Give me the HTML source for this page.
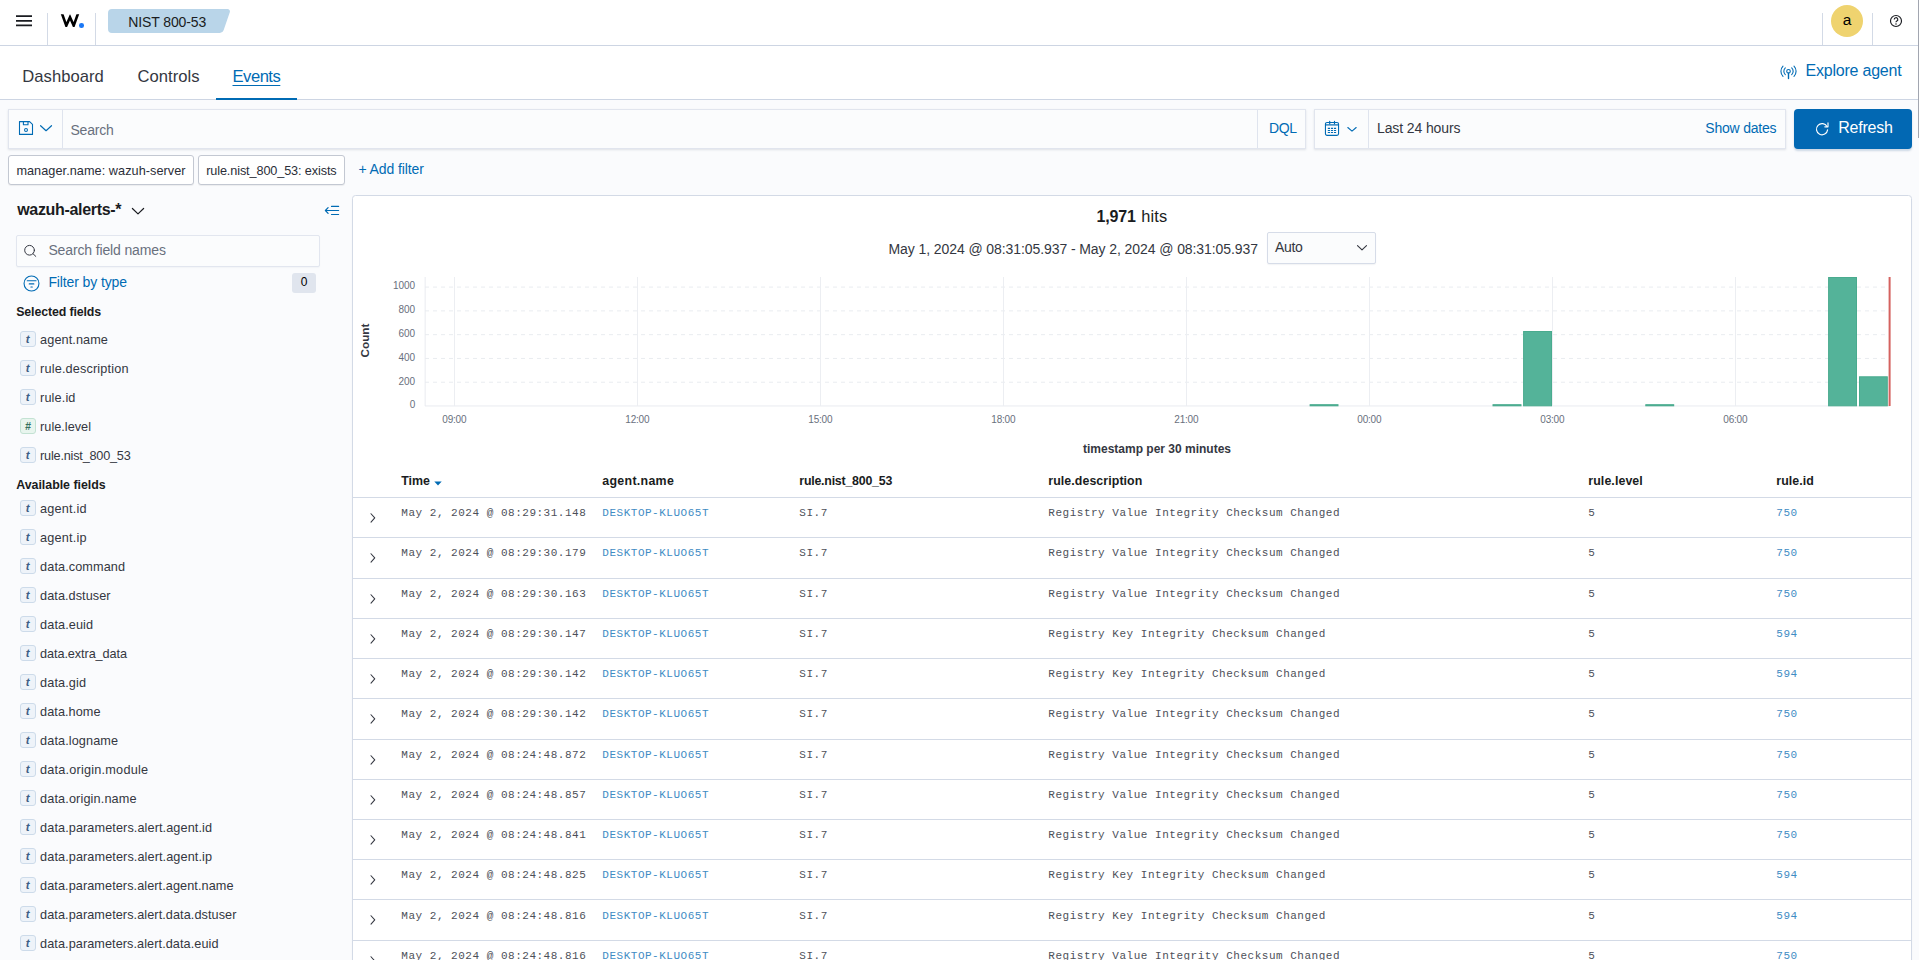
<!DOCTYPE html>
<html><head><meta charset="utf-8"><title>Wazuh</title>
<style>
html,body{margin:0;padding:0;}
body{width:1919px;height:960px;overflow:hidden;background:#fafbfd;position:relative;font-family:'Liberation Sans', sans-serif;}
.t{position:absolute;white-space:pre;}
.a{position:absolute;box-sizing:border-box;}

.line{position:absolute;background:#d3dae6;}
.tok{position:absolute;box-sizing:border-box;width:16px;height:16px;border-radius:3px;border:1px solid #cddbea;background:#eef3f9;}
.tok.n{border-color:#c3e2d3;background:#e8f5ee;}
.pill{position:absolute;box-sizing:border-box;background:#fff;border:1px solid #c3c8d2;border-radius:3px;box-shadow:0 1px 1px rgba(0,0,0,.06);}
.box{position:absolute;box-sizing:border-box;background:#fbfcfd;border:1px solid #e1e5ee;box-shadow:0 1px 2px rgba(100,110,130,.18);}

</style></head><body>
<div class="a" style="left:0;top:0;width:1919px;height:45px;background:#fff"></div><div class="line" style="left:0;top:45px;width:1919px;height:1px;background:#cdd5e3"></div><svg class="a" style="left:16px;top:13px" width="16" height="16" viewBox="0 0 16 16"><path d="M0 3.2h16M0 7.8h16M0 12.4h16" stroke="#1a1c21" stroke-width="1.7" fill="none"/></svg><div class="line" style="left:47px;top:13px;width:1px;height:32px"></div><div class="line" style="left:95px;top:13px;width:1px;height:32px"></div><svg class="a" style="left:59px;top:12px" width="22" height="17" viewBox="0 0 22 17"><defs><clipPath id="wc"><rect x="0" y="2.2" width="22" height="12.7"/></clipPath></defs><path clip-path="url(#wc)" d="M1.97 -1.2L7.3 13.6 11 5.3 14.7 13.6 20.03 -1.2" fill="none" stroke="#000" stroke-width="2.6" stroke-linejoin="miter" stroke-miterlimit="8"/></svg><div class="a" style="left:79.1px;top:23px;width:4.7px;height:4.7px;border-radius:50%;background:#1b78f5"></div><svg class="a" style="left:108px;top:9px" width="124" height="24" viewBox="0 0 124 24"><path d="M4 0H119.5a2.5 2.5 0 0 1 2.3 3.3L115.6 21.3a4 4 0 0 1 -3.8 2.7H4a4 4 0 0 1 -4 -4V4a4 4 0 0 1 4 -4z" fill="#b9d5e9"/></svg><div class="line" style="left:1822px;top:13px;width:1px;height:32px"></div><div class="line" style="left:1872px;top:13px;width:1px;height:32px"></div><div class="a" style="left:1831px;top:5px;width:32px;height:32px;border-radius:50%;background:#efd36f"></div><svg class="a" style="left:1888px;top:13px" width="16" height="16" viewBox="0 0 16 16"><circle cx="8" cy="8" r="5.5" fill="none" stroke="#1a1c21" stroke-width="1.15"/><path d="M6.2 6.5a1.8 1.8 0 1 1 2.7 1.55c-.6.35-.9.7-.9 1.25" fill="none" stroke="#1a1c21" stroke-width="1.15"/><circle cx="8" cy="11" r=".75" fill="#1a1c21"/></svg><div class="a" style="left:0;top:46px;width:1919px;height:54px;background:#fff"></div><div class="line" style="left:0;top:99px;width:1919px;height:1px;background:#cdd5e3"></div><div class="a" style="left:216px;top:98px;width:81px;height:2px;background:#006bb4"></div><svg class="a" style="left:1780.1px;top:63.9px" width="17" height="17" viewBox="0 0 17 17" fill="none" stroke="#006bb4" stroke-width="1.1" stroke-linecap="round"><circle cx="8.5" cy="7.3" r="1.8"/><path d="M8.5 9.1v5.4" stroke-width="1.4"/><path d="M5.3 3.9a4.7 4.7 0 0 0 0 6.8M11.7 3.9a4.7 4.7 0 0 1 0 6.8"/><path d="M3 2.2a7.3 7.3 0 0 0 0 10.2M14 2.2a7.3 7.3 0 0 1 0 10.2"/></svg><div class="box" style="left:8px;top:109px;width:1298px;height:40px"></div><div class="line" style="left:62px;top:110px;width:1px;height:38px;background:#dfe4ee"></div><div class="line" style="left:1257px;top:110px;width:1px;height:38px;background:#dfe4ee"></div><svg class="a" style="left:18px;top:120px" width="16" height="16" viewBox="0 0 16 16" fill="none" stroke="#006bb4" stroke-width="1.1" stroke-linejoin="round"><path d="M1.5 1.6H11.6L14.5 4.3V14.4H1.5z"/><path d="M5.4 1.6V4.8H10V1.6"/><circle cx="8" cy="10" r="1.45"/></svg><svg class="a" style="left:39px;top:123.8px" width="14" height="9" viewBox="0 0 14 9" fill="none" stroke="#006bb4" stroke-width="1.2" stroke-linecap="round" stroke-linejoin="round"><path d="M1.6 1.7L7.05 6.7 12.5 1.7"/></svg><div class="box" style="left:1314px;top:109px;width:472px;height:40px"></div><div class="line" style="left:1368px;top:110px;width:1px;height:38px;background:#dfe4ee"></div><svg class="a" style="left:1324px;top:120px" width="16" height="17" viewBox="0 0 16 17" fill="none" stroke="#006bb4" stroke-width="1.1"><rect x="1.45" y="2.45" width="13.1" height="12.9" rx="1.6"/><path d="M1.45 4.9h13.1" stroke-width="1.2"/><path d="M5.7 1.4v2.4M10.5 1.4v2.4" stroke-linecap="round" stroke-width="1.2"/><path d="M3.8 8.4h2.2M6.9 8.4h2.2M10 8.4h2.1M3.8 10.5h2.2M6.9 10.5h2.2M10 10.5h2.1M3.8 12.5h2.2M6.9 12.5h2.2M10 12.5h2.1" stroke-width="1.1"/></svg><svg class="a" style="left:1347px;top:125.6px" width="10" height="7" viewBox="0 0 10 7" fill="none" stroke="#006bb4" stroke-width="1.1" stroke-linecap="round" stroke-linejoin="round"><path d="M.8 1.5L5 5.2 9.2 1.5"/></svg><div class="a" style="left:1794px;top:109px;width:118px;height:40px;border-radius:4px;background:#0268b3;box-shadow:0 2px 2px rgba(0,60,120,.18)"></div><svg class="a" style="left:1814px;top:120.5px" width="16" height="16" viewBox="0 0 16 16" fill="none" stroke="#fff" stroke-width="1.15" stroke-linecap="round" stroke-linejoin="round"><path d="M13 5.6A5.6 5.6 0 1 0 13.6 8.9"/><path d="M10.8 5.8h3.2V1.9"/></svg><div class="pill" style="left:8px;top:155px;width:186px;height:30px"></div><div class="pill" style="left:198px;top:155px;width:147px;height:30px"></div><svg class="a" style="left:131px;top:206.5px" width="14" height="9" viewBox="0 0 14 9" fill="none" stroke="#1a1c21" stroke-width="1.2" stroke-linecap="round" stroke-linejoin="round"><path d="M1.4 1.5L7 6.9 12.6 1.5"/></svg><svg class="a" style="left:324px;top:204px" width="17" height="13" viewBox="0 0 17 13" fill="none" stroke="#006bb4" stroke-width="1.2" stroke-linecap="round" stroke-linejoin="round"><path d="M7.5 2.4H14.6M1.6 6.5H14.6M7.5 10.5H14.6"/><path d="M4.1 3.6L1.4 6.5 4.1 9.4"/></svg><div class="a" style="left:16px;top:235px;width:304px;height:32px;border:1px solid #e2e6ef;border-radius:2px;background:#fbfcfd;box-shadow:0 1px 1px rgba(100,110,130,.05)"></div><svg class="a" style="left:23px;top:244px" width="14" height="14" viewBox="0 0 14 14" fill="none" stroke="#343741" stroke-width="1" stroke-linecap="round"><circle cx="6.55" cy="6.25" r="4.85"/><path d="M10.1 9.8l2.7 2.6"/></svg><svg class="a" style="left:23.4px;top:274.5px" width="17" height="17" viewBox="0 0 17 17" fill="none" stroke="#006bb4" stroke-width="1.1" stroke-linecap="round"><circle cx="8.5" cy="8.5" r="7.45"/><path d="M4.25 5.8h8.8M6.25 8.9h4.6M7.9 12h1.4"/></svg><div class="a" style="left:292px;top:273px;width:24px;height:20px;border-radius:3px;background:#e0e5ee"></div><div class="tok" style="left:20px;top:331.3px"></div><div class="tok" style="left:20px;top:360.3px"></div><div class="tok" style="left:20px;top:389.3px"></div><div class="tok n" style="left:20px;top:418.3px"></div><div class="tok" style="left:20px;top:447.3px"></div><div class="tok" style="left:20px;top:500.3px"></div><div class="tok" style="left:20px;top:529.3px"></div><div class="tok" style="left:20px;top:558.3px"></div><div class="tok" style="left:20px;top:587.3px"></div><div class="tok" style="left:20px;top:616.3px"></div><div class="tok" style="left:20px;top:645.3px"></div><div class="tok" style="left:20px;top:674.3px"></div><div class="tok" style="left:20px;top:703.3px"></div><div class="tok" style="left:20px;top:732.3px"></div><div class="tok" style="left:20px;top:761.3px"></div><div class="tok" style="left:20px;top:790.3px"></div><div class="tok" style="left:20px;top:819.3px"></div><div class="tok" style="left:20px;top:848.3px"></div><div class="tok" style="left:20px;top:877.3px"></div><div class="tok" style="left:20px;top:906.3px"></div><div class="tok" style="left:20px;top:935.3px"></div><div class="a" style="left:352px;top:195px;width:1560px;height:800px;background:#fff;border:1px solid #d3dae6;border-radius:3.5px;box-shadow:0 2px 2px -1px rgba(152,162,179,.3)"></div><div class="a" style="left:1267px;top:232px;width:109px;height:32px;border:1px solid #d6dce8;border-radius:2px;background:#fbfcfd;box-shadow:0 1px 1px rgba(100,110,130,.08)"></div><svg class="a" style="left:1356px;top:244.1px" width="12" height="8" viewBox="0 0 12 8" fill="none" stroke="#343741" stroke-width="1.1" stroke-linecap="round" stroke-linejoin="round"><path d="M1.5 1.6L6 5.9 10.5 1.6"/></svg><svg class="a" style="left:0;top:0" width="1919" height="470" viewBox="0 0 1919 470"><path d="M425 382.22H1890" stroke="#e9ecf0" stroke-width="1" stroke-dasharray="4 4" fill="none"/><path d="M425 358.44H1890" stroke="#e9ecf0" stroke-width="1" stroke-dasharray="4 4" fill="none"/><path d="M425 334.66H1890" stroke="#e9ecf0" stroke-width="1" stroke-dasharray="4 4" fill="none"/><path d="M425 310.88H1890" stroke="#e9ecf0" stroke-width="1" stroke-dasharray="4 4" fill="none"/><path d="M425 287.10H1890" stroke="#e9ecf0" stroke-width="1" stroke-dasharray="4 4" fill="none"/><path d="M425 405.95H1890" stroke="#e9ebf0" stroke-width="1" fill="none"/><path d="M425.15 277V406" stroke="#e9ebf0" stroke-width="1" fill="none"/><path d="M454.5 277V406" stroke="#eceef2" stroke-width="1" fill="none"/><path d="M637.5 277V406" stroke="#eceef2" stroke-width="1" fill="none"/><path d="M820.5 277V406" stroke="#eceef2" stroke-width="1" fill="none"/><path d="M1003.5 277V406" stroke="#eceef2" stroke-width="1" fill="none"/><path d="M1186.5 277V406" stroke="#eceef2" stroke-width="1" fill="none"/><path d="M1369.5 277V406" stroke="#eceef2" stroke-width="1" fill="none"/><path d="M1552.5 277V406" stroke="#eceef2" stroke-width="1" fill="none"/><path d="M1735.5 277V406" stroke="#eceef2" stroke-width="1" fill="none"/><rect x="1310.1" y="404.7" width="27.9" height="1.1" fill="#54b399" stroke="#49ab8e" stroke-width="1"/><rect x="1493.0" y="404.7" width="28.0" height="1.1" fill="#54b399" stroke="#49ab8e" stroke-width="1"/><rect x="1523.6" y="331.5" width="27.9" height="74.3" fill="#54b399" stroke="#49ab8e" stroke-width="1"/><rect x="1645.8" y="404.7" width="27.9" height="1.1" fill="#54b399" stroke="#49ab8e" stroke-width="1"/><rect x="1828.6" y="277.5" width="27.9" height="128.3" fill="#54b399" stroke="#49ab8e" stroke-width="1"/><rect x="1859.5" y="376.8" width="27.8" height="29.0" fill="#54b399" stroke="#49ab8e" stroke-width="1"/><rect x="1888.6" y="277" width="2" height="129" fill="#d5625f"/></svg><svg class="a" style="left:433.9px;top:480.8px" width="8" height="5" viewBox="0 0 8 5"><path d="M.3 .5h7.4L4 4.5z" fill="#006bb4"/></svg><div class="line" style="left:353px;top:497px;width:1558px;height:1px;background:#d3dae6"></div><svg class="a" style="left:368px;top:511px" width="9" height="13" viewBox="0 0 9 13" fill="none" stroke="#343741" stroke-width="1.05" stroke-linecap="round" stroke-linejoin="round"><path d="M3 2.75L6.75 6.95 3 11.15"/></svg><div class="line" style="left:353px;top:537px;width:1558px;height:1px;background:#d3dae6"></div><svg class="a" style="left:368px;top:551px" width="9" height="13" viewBox="0 0 9 13" fill="none" stroke="#343741" stroke-width="1.05" stroke-linecap="round" stroke-linejoin="round"><path d="M3 2.75L6.75 6.95 3 11.15"/></svg><div class="line" style="left:353px;top:578px;width:1558px;height:1px;background:#d3dae6"></div><svg class="a" style="left:368px;top:592px" width="9" height="13" viewBox="0 0 9 13" fill="none" stroke="#343741" stroke-width="1.05" stroke-linecap="round" stroke-linejoin="round"><path d="M3 2.75L6.75 6.95 3 11.15"/></svg><div class="line" style="left:353px;top:618px;width:1558px;height:1px;background:#d3dae6"></div><svg class="a" style="left:368px;top:632px" width="9" height="13" viewBox="0 0 9 13" fill="none" stroke="#343741" stroke-width="1.05" stroke-linecap="round" stroke-linejoin="round"><path d="M3 2.75L6.75 6.95 3 11.15"/></svg><div class="line" style="left:353px;top:658px;width:1558px;height:1px;background:#d3dae6"></div><svg class="a" style="left:368px;top:672px" width="9" height="13" viewBox="0 0 9 13" fill="none" stroke="#343741" stroke-width="1.05" stroke-linecap="round" stroke-linejoin="round"><path d="M3 2.75L6.75 6.95 3 11.15"/></svg><div class="line" style="left:353px;top:698px;width:1558px;height:1px;background:#d3dae6"></div><svg class="a" style="left:368px;top:712px" width="9" height="13" viewBox="0 0 9 13" fill="none" stroke="#343741" stroke-width="1.05" stroke-linecap="round" stroke-linejoin="round"><path d="M3 2.75L6.75 6.95 3 11.15"/></svg><div class="line" style="left:353px;top:739px;width:1558px;height:1px;background:#d3dae6"></div><svg class="a" style="left:368px;top:753px" width="9" height="13" viewBox="0 0 9 13" fill="none" stroke="#343741" stroke-width="1.05" stroke-linecap="round" stroke-linejoin="round"><path d="M3 2.75L6.75 6.95 3 11.15"/></svg><div class="line" style="left:353px;top:779px;width:1558px;height:1px;background:#d3dae6"></div><svg class="a" style="left:368px;top:793px" width="9" height="13" viewBox="0 0 9 13" fill="none" stroke="#343741" stroke-width="1.05" stroke-linecap="round" stroke-linejoin="round"><path d="M3 2.75L6.75 6.95 3 11.15"/></svg><div class="line" style="left:353px;top:819px;width:1558px;height:1px;background:#d3dae6"></div><svg class="a" style="left:368px;top:833px" width="9" height="13" viewBox="0 0 9 13" fill="none" stroke="#343741" stroke-width="1.05" stroke-linecap="round" stroke-linejoin="round"><path d="M3 2.75L6.75 6.95 3 11.15"/></svg><div class="line" style="left:353px;top:859px;width:1558px;height:1px;background:#d3dae6"></div><svg class="a" style="left:368px;top:873px" width="9" height="13" viewBox="0 0 9 13" fill="none" stroke="#343741" stroke-width="1.05" stroke-linecap="round" stroke-linejoin="round"><path d="M3 2.75L6.75 6.95 3 11.15"/></svg><div class="line" style="left:353px;top:899px;width:1558px;height:1px;background:#d3dae6"></div><svg class="a" style="left:368px;top:913px" width="9" height="13" viewBox="0 0 9 13" fill="none" stroke="#343741" stroke-width="1.05" stroke-linecap="round" stroke-linejoin="round"><path d="M3 2.75L6.75 6.95 3 11.15"/></svg><div class="line" style="left:353px;top:940px;width:1558px;height:1px;background:#d3dae6"></div><svg class="a" style="left:368px;top:954px" width="9" height="13" viewBox="0 0 9 13" fill="none" stroke="#343741" stroke-width="1.05" stroke-linecap="round" stroke-linejoin="round"><path d="M3 2.75L6.75 6.95 3 11.15"/></svg><div class="a" style="left:1918px;top:0;width:1px;height:138px;background:#a2a6b0"></div>
<span class="t" style="left:128.30px;top:14.00px;font-family:'Liberation Sans', sans-serif;font-size:14px;line-height:16px;color:#1a1c21;letter-spacing:-0.113px;">NIST 800-53</span><span class="t" style="left:1842.69px;top:11.00px;font-family:'Liberation Sans', sans-serif;font-size:15.5px;line-height:17px;color:#000;">a</span><span class="t" style="left:22.30px;top:67.00px;font-family:'Liberation Sans', sans-serif;font-size:16.6px;line-height:19px;color:#343741;letter-spacing:0.039px;">Dashboard</span><span class="t" style="left:137.50px;top:67.00px;font-family:'Liberation Sans', sans-serif;font-size:16.6px;line-height:19px;color:#343741;letter-spacing:0.029px;">Controls</span><span class="t" style="left:232.50px;top:67.00px;font-family:'Liberation Sans', sans-serif;font-size:16.6px;line-height:19px;color:#006bb4;letter-spacing:-0.487px;text-decoration:underline;text-decoration-thickness:1px;text-underline-offset:2.5px;">Events</span><span class="t" style="left:1805.60px;top:62.00px;font-family:'Liberation Sans', sans-serif;font-size:16px;line-height:17px;color:#006bb4;letter-spacing:-0.228px;">Explore agent</span><span class="t" style="left:70.50px;top:122.00px;font-family:'Liberation Sans', sans-serif;font-size:14px;line-height:16px;color:#69707d;letter-spacing:-0.232px;">Search</span><span class="t" style="left:1269.00px;top:120.00px;font-family:'Liberation Sans', sans-serif;font-size:14px;line-height:16px;color:#006bb4;letter-spacing:-0.398px;">DQL</span><span class="t" style="left:1377.00px;top:120.00px;font-family:'Liberation Sans', sans-serif;font-size:14px;line-height:16px;color:#343741;letter-spacing:-0.112px;">Last 24 hours</span><span class="t" style="left:1705.30px;top:120.00px;font-family:'Liberation Sans', sans-serif;font-size:14px;line-height:16px;color:#006bb4;letter-spacing:-0.208px;">Show dates</span><span class="t" style="left:1838.30px;top:119.00px;font-family:'Liberation Sans', sans-serif;font-size:16px;line-height:17px;color:#fff;letter-spacing:-0.255px;">Refresh</span><span class="t" style="left:16.40px;top:164.00px;font-family:'Liberation Sans', sans-serif;font-size:12.7px;line-height:14px;color:#2b2e38;letter-spacing:0.054px;">manager.name: wazuh-server</span><span class="t" style="left:206.20px;top:164.00px;font-family:'Liberation Sans', sans-serif;font-size:12.7px;line-height:14px;color:#2b2e38;letter-spacing:-0.122px;">rule.nist_800_53: exists</span><span class="t" style="left:358.40px;top:161.00px;font-family:'Liberation Sans', sans-serif;font-size:14px;line-height:16px;color:#006bb4;letter-spacing:-0.095px;">+ Add filter</span><span class="t" style="left:17.20px;top:201.00px;font-family:'Liberation Sans', sans-serif;font-size:16px;line-height:17px;color:#1a1c21;font-weight:700;letter-spacing:-0.321px;">wazuh-alerts-*</span><span class="t" style="left:48.40px;top:242.00px;font-family:'Liberation Sans', sans-serif;font-size:14px;line-height:16px;color:#69707d;letter-spacing:-0.138px;">Search field names</span><span class="t" style="left:48.40px;top:274.00px;font-family:'Liberation Sans', sans-serif;font-size:14px;line-height:16px;color:#006bb4;letter-spacing:-0.119px;">Filter by type</span><span class="t" style="left:300.66px;top:275.00px;font-family:'Liberation Sans', sans-serif;font-size:12px;line-height:14px;color:#000;">0</span><span class="t" style="left:16.20px;top:305.00px;font-family:'Liberation Sans', sans-serif;font-size:12.4px;line-height:14px;color:#1a1c21;font-weight:700;letter-spacing:-0.127px;">Selected fields</span><span class="t" style="left:16.20px;top:478.00px;font-family:'Liberation Sans', sans-serif;font-size:12.4px;line-height:14px;color:#1a1c21;font-weight:700;letter-spacing:-0.018px;">Available fields</span><span class="t" style="left:25.78px;top:333.00px;font-family:'Liberation Sans', sans-serif;font-size:11.5px;line-height:12px;color:#3f5f86;font-weight:700;font-style:italic;">t</span><span class="t" style="left:40.10px;top:333.00px;font-family:'Liberation Sans', sans-serif;font-size:12.7px;line-height:14px;color:#343741;letter-spacing:0.087px;">agent.name</span><span class="t" style="left:25.78px;top:362.00px;font-family:'Liberation Sans', sans-serif;font-size:11.5px;line-height:12px;color:#3f5f86;font-weight:700;font-style:italic;">t</span><span class="t" style="left:40.10px;top:362.00px;font-family:'Liberation Sans', sans-serif;font-size:12.7px;line-height:14px;color:#343741;letter-spacing:0.157px;">rule.description</span><span class="t" style="left:25.78px;top:391.00px;font-family:'Liberation Sans', sans-serif;font-size:11.5px;line-height:12px;color:#3f5f86;font-weight:700;font-style:italic;">t</span><span class="t" style="left:40.10px;top:391.00px;font-family:'Liberation Sans', sans-serif;font-size:12.7px;line-height:14px;color:#343741;letter-spacing:0.123px;">rule.id</span><span class="t" style="left:24.98px;top:420.00px;font-family:'Liberation Sans', sans-serif;font-size:10.5px;line-height:12px;color:#357160;font-weight:700;font-style:italic;">#</span><span class="t" style="left:40.10px;top:420.00px;font-family:'Liberation Sans', sans-serif;font-size:12.7px;line-height:14px;color:#343741;letter-spacing:0.013px;">rule.level</span><span class="t" style="left:25.78px;top:449.00px;font-family:'Liberation Sans', sans-serif;font-size:11.5px;line-height:12px;color:#3f5f86;font-weight:700;font-style:italic;">t</span><span class="t" style="left:40.10px;top:449.00px;font-family:'Liberation Sans', sans-serif;font-size:12.7px;line-height:14px;color:#343741;letter-spacing:-0.209px;">rule.nist_800_53</span><span class="t" style="left:25.78px;top:502.00px;font-family:'Liberation Sans', sans-serif;font-size:11.5px;line-height:12px;color:#3f5f86;font-weight:700;font-style:italic;">t</span><span class="t" style="left:40.10px;top:502.00px;font-family:'Liberation Sans', sans-serif;font-size:12.7px;line-height:14px;color:#343741;letter-spacing:0.178px;">agent.id</span><span class="t" style="left:25.78px;top:531.00px;font-family:'Liberation Sans', sans-serif;font-size:11.5px;line-height:12px;color:#3f5f86;font-weight:700;font-style:italic;">t</span><span class="t" style="left:40.10px;top:531.00px;font-family:'Liberation Sans', sans-serif;font-size:12.7px;line-height:14px;color:#343741;letter-spacing:0.178px;">agent.ip</span><span class="t" style="left:25.78px;top:560.00px;font-family:'Liberation Sans', sans-serif;font-size:11.5px;line-height:12px;color:#3f5f86;font-weight:700;font-style:italic;">t</span><span class="t" style="left:40.10px;top:560.00px;font-family:'Liberation Sans', sans-serif;font-size:12.7px;line-height:14px;color:#343741;letter-spacing:0.088px;">data.command</span><span class="t" style="left:25.78px;top:589.00px;font-family:'Liberation Sans', sans-serif;font-size:11.5px;line-height:12px;color:#3f5f86;font-weight:700;font-style:italic;">t</span><span class="t" style="left:40.10px;top:589.00px;font-family:'Liberation Sans', sans-serif;font-size:12.7px;line-height:14px;color:#343741;letter-spacing:0.052px;">data.dstuser</span><span class="t" style="left:25.78px;top:618.00px;font-family:'Liberation Sans', sans-serif;font-size:11.5px;line-height:12px;color:#3f5f86;font-weight:700;font-style:italic;">t</span><span class="t" style="left:40.10px;top:618.00px;font-family:'Liberation Sans', sans-serif;font-size:12.7px;line-height:14px;color:#343741;letter-spacing:0.085px;">data.euid</span><span class="t" style="left:25.78px;top:647.00px;font-family:'Liberation Sans', sans-serif;font-size:11.5px;line-height:12px;color:#3f5f86;font-weight:700;font-style:italic;">t</span><span class="t" style="left:40.10px;top:647.00px;font-family:'Liberation Sans', sans-serif;font-size:12.7px;line-height:14px;color:#343741;letter-spacing:-0.092px;">data.extra_data</span><span class="t" style="left:25.78px;top:676.00px;font-family:'Liberation Sans', sans-serif;font-size:11.5px;line-height:12px;color:#3f5f86;font-weight:700;font-style:italic;">t</span><span class="t" style="left:40.10px;top:676.00px;font-family:'Liberation Sans', sans-serif;font-size:12.7px;line-height:14px;color:#343741;letter-spacing:0.106px;">data.gid</span><span class="t" style="left:25.78px;top:705.00px;font-family:'Liberation Sans', sans-serif;font-size:11.5px;line-height:12px;color:#3f5f86;font-weight:700;font-style:italic;">t</span><span class="t" style="left:40.10px;top:705.00px;font-family:'Liberation Sans', sans-serif;font-size:12.7px;line-height:14px;color:#343741;letter-spacing:0.054px;">data.home</span><span class="t" style="left:25.78px;top:734.00px;font-family:'Liberation Sans', sans-serif;font-size:11.5px;line-height:12px;color:#3f5f86;font-weight:700;font-style:italic;">t</span><span class="t" style="left:40.10px;top:734.00px;font-family:'Liberation Sans', sans-serif;font-size:12.7px;line-height:14px;color:#343741;letter-spacing:0.092px;">data.logname</span><span class="t" style="left:25.78px;top:763.00px;font-family:'Liberation Sans', sans-serif;font-size:11.5px;line-height:12px;color:#3f5f86;font-weight:700;font-style:italic;">t</span><span class="t" style="left:40.10px;top:763.00px;font-family:'Liberation Sans', sans-serif;font-size:12.7px;line-height:14px;color:#343741;letter-spacing:0.206px;">data.origin.module</span><span class="t" style="left:25.78px;top:792.00px;font-family:'Liberation Sans', sans-serif;font-size:11.5px;line-height:12px;color:#3f5f86;font-weight:700;font-style:italic;">t</span><span class="t" style="left:40.10px;top:792.00px;font-family:'Liberation Sans', sans-serif;font-size:12.7px;line-height:14px;color:#343741;letter-spacing:0.126px;">data.origin.name</span><span class="t" style="left:25.78px;top:821.00px;font-family:'Liberation Sans', sans-serif;font-size:11.5px;line-height:12px;color:#3f5f86;font-weight:700;font-style:italic;">t</span><span class="t" style="left:40.10px;top:821.00px;font-family:'Liberation Sans', sans-serif;font-size:12.7px;line-height:14px;color:#343741;letter-spacing:0.090px;">data.parameters.alert.agent.id</span><span class="t" style="left:25.78px;top:850.00px;font-family:'Liberation Sans', sans-serif;font-size:11.5px;line-height:12px;color:#3f5f86;font-weight:700;font-style:italic;">t</span><span class="t" style="left:40.10px;top:850.00px;font-family:'Liberation Sans', sans-serif;font-size:12.7px;line-height:14px;color:#343741;letter-spacing:0.090px;">data.parameters.alert.agent.ip</span><span class="t" style="left:25.78px;top:879.00px;font-family:'Liberation Sans', sans-serif;font-size:11.5px;line-height:12px;color:#3f5f86;font-weight:700;font-style:italic;">t</span><span class="t" style="left:40.10px;top:879.00px;font-family:'Liberation Sans', sans-serif;font-size:12.7px;line-height:14px;color:#343741;letter-spacing:0.073px;">data.parameters.alert.agent.name</span><span class="t" style="left:25.78px;top:908.00px;font-family:'Liberation Sans', sans-serif;font-size:11.5px;line-height:12px;color:#3f5f86;font-weight:700;font-style:italic;">t</span><span class="t" style="left:40.10px;top:908.00px;font-family:'Liberation Sans', sans-serif;font-size:12.7px;line-height:14px;color:#343741;letter-spacing:0.074px;">data.parameters.alert.data.dstuser</span><span class="t" style="left:25.78px;top:937.00px;font-family:'Liberation Sans', sans-serif;font-size:11.5px;line-height:12px;color:#3f5f86;font-weight:700;font-style:italic;">t</span><span class="t" style="left:40.10px;top:937.00px;font-family:'Liberation Sans', sans-serif;font-size:12.7px;line-height:14px;color:#343741;letter-spacing:0.069px;">data.parameters.alert.data.euid</span><span class="t" style="left:1096.40px;top:208.00px;font-family:'Liberation Sans', sans-serif;font-size:16px;line-height:17px;color:#1a1c21;font-weight:700;letter-spacing:-0.137px;">1,971</span><span class="t" style="left:1141.20px;top:207.00px;font-family:'Liberation Sans', sans-serif;font-size:16.4px;line-height:18px;color:#1a1c21;letter-spacing:0.161px;">hits</span><span class="t" style="left:888.50px;top:241.00px;font-family:'Liberation Sans', sans-serif;font-size:14px;line-height:16px;color:#343741;letter-spacing:-0.084px;">May 1, 2024 @ 08:31:05.937 - May 2, 2024 @ 08:31:05.937</span><span class="t" style="left:1275.10px;top:239.00px;font-family:'Liberation Sans', sans-serif;font-size:14px;line-height:16px;color:#343741;letter-spacing:-0.371px;">Auto</span><span class="t" style="left:392.95px;top:280.00px;font-family:'Liberation Sans', sans-serif;font-size:10px;line-height:11px;color:#69707d;">1000</span><span class="t" style="left:398.51px;top:304.00px;font-family:'Liberation Sans', sans-serif;font-size:10px;line-height:11px;color:#69707d;">800</span><span class="t" style="left:398.51px;top:328.00px;font-family:'Liberation Sans', sans-serif;font-size:10px;line-height:11px;color:#69707d;">600</span><span class="t" style="left:398.51px;top:352.00px;font-family:'Liberation Sans', sans-serif;font-size:10px;line-height:11px;color:#69707d;">400</span><span class="t" style="left:398.51px;top:376.00px;font-family:'Liberation Sans', sans-serif;font-size:10px;line-height:11px;color:#69707d;">200</span><span class="t" style="left:409.64px;top:399.00px;font-family:'Liberation Sans', sans-serif;font-size:10px;line-height:11px;color:#69707d;">0</span><span class="t" style="left:442.30px;top:414.00px;font-family:'Liberation Sans', sans-serif;font-size:10px;line-height:11px;color:#69707d;letter-spacing:-0.208px;">09:00</span><span class="t" style="left:625.30px;top:414.00px;font-family:'Liberation Sans', sans-serif;font-size:10px;line-height:11px;color:#69707d;letter-spacing:-0.208px;">12:00</span><span class="t" style="left:808.30px;top:414.00px;font-family:'Liberation Sans', sans-serif;font-size:10px;line-height:11px;color:#69707d;letter-spacing:-0.208px;">15:00</span><span class="t" style="left:991.30px;top:414.00px;font-family:'Liberation Sans', sans-serif;font-size:10px;line-height:11px;color:#69707d;letter-spacing:-0.208px;">18:00</span><span class="t" style="left:1174.30px;top:414.00px;font-family:'Liberation Sans', sans-serif;font-size:10px;line-height:11px;color:#69707d;letter-spacing:-0.208px;">21:00</span><span class="t" style="left:1357.30px;top:414.00px;font-family:'Liberation Sans', sans-serif;font-size:10px;line-height:11px;color:#69707d;letter-spacing:-0.208px;">00:00</span><span class="t" style="left:1540.30px;top:414.00px;font-family:'Liberation Sans', sans-serif;font-size:10px;line-height:11px;color:#69707d;letter-spacing:-0.208px;">03:00</span><span class="t" style="left:1723.30px;top:414.00px;font-family:'Liberation Sans', sans-serif;font-size:10px;line-height:11px;color:#69707d;letter-spacing:-0.208px;">06:00</span><span class="t" style="left:1083.00px;top:442.00px;font-family:'Liberation Sans', sans-serif;font-size:12px;line-height:14px;color:#343741;font-weight:700;letter-spacing:-0.003px;">timestamp per 30 minutes</span><span class="t" style="left:348.02px;top:334.00px;font-family:'Liberation Sans', sans-serif;font-size:11.7px;line-height:13px;color:#343741;font-weight:700;transform:rotate(-90deg);transform-origin:center center;">Count</span><span class="t" style="left:401.30px;top:474.00px;font-family:'Liberation Sans', sans-serif;font-size:12.4px;line-height:14px;color:#1a1c21;font-weight:700;letter-spacing:-0.068px;">Time</span><span class="t" style="left:602.30px;top:474.00px;font-family:'Liberation Sans', sans-serif;font-size:12.4px;line-height:14px;color:#1a1c21;font-weight:700;letter-spacing:0.293px;">agent.name</span><span class="t" style="left:799.30px;top:474.00px;font-family:'Liberation Sans', sans-serif;font-size:12.4px;line-height:14px;color:#1a1c21;font-weight:700;letter-spacing:-0.229px;">rule.nist_800_53</span><span class="t" style="left:1048.30px;top:474.00px;font-family:'Liberation Sans', sans-serif;font-size:12.4px;line-height:14px;color:#1a1c21;font-weight:700;letter-spacing:0.070px;">rule.description</span><span class="t" style="left:1588.30px;top:474.00px;font-family:'Liberation Sans', sans-serif;font-size:12.4px;line-height:14px;color:#1a1c21;font-weight:700;letter-spacing:0.085px;">rule.level</span><span class="t" style="left:1776.30px;top:474.00px;font-family:'Liberation Sans', sans-serif;font-size:12.4px;line-height:14px;color:#1a1c21;font-weight:700;letter-spacing:0.052px;">rule.id</span><span class="t" style="left:401.30px;top:507.00px;font-family:'Liberation Mono', monospace;font-size:11px;line-height:12px;color:#4d5059;letter-spacing:0.515px;">May 2, 2024 @ 08:29:31.148</span><span class="t" style="left:602.30px;top:507.00px;font-family:'Liberation Mono', monospace;font-size:11px;line-height:12px;color:#3f8cc4;letter-spacing:0.515px;">DESKTOP-KLUO65T</span><span class="t" style="left:799.30px;top:507.00px;font-family:'Liberation Mono', monospace;font-size:11px;line-height:12px;color:#4d5059;letter-spacing:0.515px;">SI.7</span><span class="t" style="left:1048.30px;top:507.00px;font-family:'Liberation Mono', monospace;font-size:11px;line-height:12px;color:#4d5059;letter-spacing:0.515px;">Registry Value Integrity Checksum Changed</span><span class="t" style="left:1588.30px;top:507.00px;font-family:'Liberation Mono', monospace;font-size:11px;line-height:12px;color:#4d5059;">5</span><span class="t" style="left:1776.30px;top:507.00px;font-family:'Liberation Mono', monospace;font-size:11px;line-height:12px;color:#3f8cc4;letter-spacing:0.515px;">750</span><span class="t" style="left:401.30px;top:547.00px;font-family:'Liberation Mono', monospace;font-size:11px;line-height:12px;color:#4d5059;letter-spacing:0.515px;">May 2, 2024 @ 08:29:30.179</span><span class="t" style="left:602.30px;top:547.00px;font-family:'Liberation Mono', monospace;font-size:11px;line-height:12px;color:#3f8cc4;letter-spacing:0.515px;">DESKTOP-KLUO65T</span><span class="t" style="left:799.30px;top:547.00px;font-family:'Liberation Mono', monospace;font-size:11px;line-height:12px;color:#4d5059;letter-spacing:0.515px;">SI.7</span><span class="t" style="left:1048.30px;top:547.00px;font-family:'Liberation Mono', monospace;font-size:11px;line-height:12px;color:#4d5059;letter-spacing:0.515px;">Registry Value Integrity Checksum Changed</span><span class="t" style="left:1588.30px;top:547.00px;font-family:'Liberation Mono', monospace;font-size:11px;line-height:12px;color:#4d5059;">5</span><span class="t" style="left:1776.30px;top:547.00px;font-family:'Liberation Mono', monospace;font-size:11px;line-height:12px;color:#3f8cc4;letter-spacing:0.515px;">750</span><span class="t" style="left:401.30px;top:588.00px;font-family:'Liberation Mono', monospace;font-size:11px;line-height:12px;color:#4d5059;letter-spacing:0.515px;">May 2, 2024 @ 08:29:30.163</span><span class="t" style="left:602.30px;top:588.00px;font-family:'Liberation Mono', monospace;font-size:11px;line-height:12px;color:#3f8cc4;letter-spacing:0.515px;">DESKTOP-KLUO65T</span><span class="t" style="left:799.30px;top:588.00px;font-family:'Liberation Mono', monospace;font-size:11px;line-height:12px;color:#4d5059;letter-spacing:0.515px;">SI.7</span><span class="t" style="left:1048.30px;top:588.00px;font-family:'Liberation Mono', monospace;font-size:11px;line-height:12px;color:#4d5059;letter-spacing:0.515px;">Registry Value Integrity Checksum Changed</span><span class="t" style="left:1588.30px;top:588.00px;font-family:'Liberation Mono', monospace;font-size:11px;line-height:12px;color:#4d5059;">5</span><span class="t" style="left:1776.30px;top:588.00px;font-family:'Liberation Mono', monospace;font-size:11px;line-height:12px;color:#3f8cc4;letter-spacing:0.515px;">750</span><span class="t" style="left:401.30px;top:628.00px;font-family:'Liberation Mono', monospace;font-size:11px;line-height:12px;color:#4d5059;letter-spacing:0.515px;">May 2, 2024 @ 08:29:30.147</span><span class="t" style="left:602.30px;top:628.00px;font-family:'Liberation Mono', monospace;font-size:11px;line-height:12px;color:#3f8cc4;letter-spacing:0.515px;">DESKTOP-KLUO65T</span><span class="t" style="left:799.30px;top:628.00px;font-family:'Liberation Mono', monospace;font-size:11px;line-height:12px;color:#4d5059;letter-spacing:0.515px;">SI.7</span><span class="t" style="left:1048.30px;top:628.00px;font-family:'Liberation Mono', monospace;font-size:11px;line-height:12px;color:#4d5059;letter-spacing:0.515px;">Registry Key Integrity Checksum Changed</span><span class="t" style="left:1588.30px;top:628.00px;font-family:'Liberation Mono', monospace;font-size:11px;line-height:12px;color:#4d5059;">5</span><span class="t" style="left:1776.30px;top:628.00px;font-family:'Liberation Mono', monospace;font-size:11px;line-height:12px;color:#3f8cc4;letter-spacing:0.515px;">594</span><span class="t" style="left:401.30px;top:668.00px;font-family:'Liberation Mono', monospace;font-size:11px;line-height:12px;color:#4d5059;letter-spacing:0.515px;">May 2, 2024 @ 08:29:30.142</span><span class="t" style="left:602.30px;top:668.00px;font-family:'Liberation Mono', monospace;font-size:11px;line-height:12px;color:#3f8cc4;letter-spacing:0.515px;">DESKTOP-KLUO65T</span><span class="t" style="left:799.30px;top:668.00px;font-family:'Liberation Mono', monospace;font-size:11px;line-height:12px;color:#4d5059;letter-spacing:0.515px;">SI.7</span><span class="t" style="left:1048.30px;top:668.00px;font-family:'Liberation Mono', monospace;font-size:11px;line-height:12px;color:#4d5059;letter-spacing:0.515px;">Registry Key Integrity Checksum Changed</span><span class="t" style="left:1588.30px;top:668.00px;font-family:'Liberation Mono', monospace;font-size:11px;line-height:12px;color:#4d5059;">5</span><span class="t" style="left:1776.30px;top:668.00px;font-family:'Liberation Mono', monospace;font-size:11px;line-height:12px;color:#3f8cc4;letter-spacing:0.515px;">594</span><span class="t" style="left:401.30px;top:708.00px;font-family:'Liberation Mono', monospace;font-size:11px;line-height:12px;color:#4d5059;letter-spacing:0.515px;">May 2, 2024 @ 08:29:30.142</span><span class="t" style="left:602.30px;top:708.00px;font-family:'Liberation Mono', monospace;font-size:11px;line-height:12px;color:#3f8cc4;letter-spacing:0.515px;">DESKTOP-KLUO65T</span><span class="t" style="left:799.30px;top:708.00px;font-family:'Liberation Mono', monospace;font-size:11px;line-height:12px;color:#4d5059;letter-spacing:0.515px;">SI.7</span><span class="t" style="left:1048.30px;top:708.00px;font-family:'Liberation Mono', monospace;font-size:11px;line-height:12px;color:#4d5059;letter-spacing:0.515px;">Registry Value Integrity Checksum Changed</span><span class="t" style="left:1588.30px;top:708.00px;font-family:'Liberation Mono', monospace;font-size:11px;line-height:12px;color:#4d5059;">5</span><span class="t" style="left:1776.30px;top:708.00px;font-family:'Liberation Mono', monospace;font-size:11px;line-height:12px;color:#3f8cc4;letter-spacing:0.515px;">750</span><span class="t" style="left:401.30px;top:749.00px;font-family:'Liberation Mono', monospace;font-size:11px;line-height:12px;color:#4d5059;letter-spacing:0.515px;">May 2, 2024 @ 08:24:48.872</span><span class="t" style="left:602.30px;top:749.00px;font-family:'Liberation Mono', monospace;font-size:11px;line-height:12px;color:#3f8cc4;letter-spacing:0.515px;">DESKTOP-KLUO65T</span><span class="t" style="left:799.30px;top:749.00px;font-family:'Liberation Mono', monospace;font-size:11px;line-height:12px;color:#4d5059;letter-spacing:0.515px;">SI.7</span><span class="t" style="left:1048.30px;top:749.00px;font-family:'Liberation Mono', monospace;font-size:11px;line-height:12px;color:#4d5059;letter-spacing:0.515px;">Registry Value Integrity Checksum Changed</span><span class="t" style="left:1588.30px;top:749.00px;font-family:'Liberation Mono', monospace;font-size:11px;line-height:12px;color:#4d5059;">5</span><span class="t" style="left:1776.30px;top:749.00px;font-family:'Liberation Mono', monospace;font-size:11px;line-height:12px;color:#3f8cc4;letter-spacing:0.515px;">750</span><span class="t" style="left:401.30px;top:789.00px;font-family:'Liberation Mono', monospace;font-size:11px;line-height:12px;color:#4d5059;letter-spacing:0.515px;">May 2, 2024 @ 08:24:48.857</span><span class="t" style="left:602.30px;top:789.00px;font-family:'Liberation Mono', monospace;font-size:11px;line-height:12px;color:#3f8cc4;letter-spacing:0.515px;">DESKTOP-KLUO65T</span><span class="t" style="left:799.30px;top:789.00px;font-family:'Liberation Mono', monospace;font-size:11px;line-height:12px;color:#4d5059;letter-spacing:0.515px;">SI.7</span><span class="t" style="left:1048.30px;top:789.00px;font-family:'Liberation Mono', monospace;font-size:11px;line-height:12px;color:#4d5059;letter-spacing:0.515px;">Registry Value Integrity Checksum Changed</span><span class="t" style="left:1588.30px;top:789.00px;font-family:'Liberation Mono', monospace;font-size:11px;line-height:12px;color:#4d5059;">5</span><span class="t" style="left:1776.30px;top:789.00px;font-family:'Liberation Mono', monospace;font-size:11px;line-height:12px;color:#3f8cc4;letter-spacing:0.515px;">750</span><span class="t" style="left:401.30px;top:829.00px;font-family:'Liberation Mono', monospace;font-size:11px;line-height:12px;color:#4d5059;letter-spacing:0.515px;">May 2, 2024 @ 08:24:48.841</span><span class="t" style="left:602.30px;top:829.00px;font-family:'Liberation Mono', monospace;font-size:11px;line-height:12px;color:#3f8cc4;letter-spacing:0.515px;">DESKTOP-KLUO65T</span><span class="t" style="left:799.30px;top:829.00px;font-family:'Liberation Mono', monospace;font-size:11px;line-height:12px;color:#4d5059;letter-spacing:0.515px;">SI.7</span><span class="t" style="left:1048.30px;top:829.00px;font-family:'Liberation Mono', monospace;font-size:11px;line-height:12px;color:#4d5059;letter-spacing:0.515px;">Registry Value Integrity Checksum Changed</span><span class="t" style="left:1588.30px;top:829.00px;font-family:'Liberation Mono', monospace;font-size:11px;line-height:12px;color:#4d5059;">5</span><span class="t" style="left:1776.30px;top:829.00px;font-family:'Liberation Mono', monospace;font-size:11px;line-height:12px;color:#3f8cc4;letter-spacing:0.515px;">750</span><span class="t" style="left:401.30px;top:869.00px;font-family:'Liberation Mono', monospace;font-size:11px;line-height:12px;color:#4d5059;letter-spacing:0.515px;">May 2, 2024 @ 08:24:48.825</span><span class="t" style="left:602.30px;top:869.00px;font-family:'Liberation Mono', monospace;font-size:11px;line-height:12px;color:#3f8cc4;letter-spacing:0.515px;">DESKTOP-KLUO65T</span><span class="t" style="left:799.30px;top:869.00px;font-family:'Liberation Mono', monospace;font-size:11px;line-height:12px;color:#4d5059;letter-spacing:0.515px;">SI.7</span><span class="t" style="left:1048.30px;top:869.00px;font-family:'Liberation Mono', monospace;font-size:11px;line-height:12px;color:#4d5059;letter-spacing:0.515px;">Registry Key Integrity Checksum Changed</span><span class="t" style="left:1588.30px;top:869.00px;font-family:'Liberation Mono', monospace;font-size:11px;line-height:12px;color:#4d5059;">5</span><span class="t" style="left:1776.30px;top:869.00px;font-family:'Liberation Mono', monospace;font-size:11px;line-height:12px;color:#3f8cc4;letter-spacing:0.515px;">594</span><span class="t" style="left:401.30px;top:910.00px;font-family:'Liberation Mono', monospace;font-size:11px;line-height:12px;color:#4d5059;letter-spacing:0.515px;">May 2, 2024 @ 08:24:48.816</span><span class="t" style="left:602.30px;top:910.00px;font-family:'Liberation Mono', monospace;font-size:11px;line-height:12px;color:#3f8cc4;letter-spacing:0.515px;">DESKTOP-KLUO65T</span><span class="t" style="left:799.30px;top:910.00px;font-family:'Liberation Mono', monospace;font-size:11px;line-height:12px;color:#4d5059;letter-spacing:0.515px;">SI.7</span><span class="t" style="left:1048.30px;top:910.00px;font-family:'Liberation Mono', monospace;font-size:11px;line-height:12px;color:#4d5059;letter-spacing:0.515px;">Registry Key Integrity Checksum Changed</span><span class="t" style="left:1588.30px;top:910.00px;font-family:'Liberation Mono', monospace;font-size:11px;line-height:12px;color:#4d5059;">5</span><span class="t" style="left:1776.30px;top:910.00px;font-family:'Liberation Mono', monospace;font-size:11px;line-height:12px;color:#3f8cc4;letter-spacing:0.515px;">594</span><span class="t" style="left:401.30px;top:950.00px;font-family:'Liberation Mono', monospace;font-size:11px;line-height:12px;color:#4d5059;letter-spacing:0.515px;">May 2, 2024 @ 08:24:48.816</span><span class="t" style="left:602.30px;top:950.00px;font-family:'Liberation Mono', monospace;font-size:11px;line-height:12px;color:#3f8cc4;letter-spacing:0.515px;">DESKTOP-KLUO65T</span><span class="t" style="left:799.30px;top:950.00px;font-family:'Liberation Mono', monospace;font-size:11px;line-height:12px;color:#4d5059;letter-spacing:0.515px;">SI.7</span><span class="t" style="left:1048.30px;top:950.00px;font-family:'Liberation Mono', monospace;font-size:11px;line-height:12px;color:#4d5059;letter-spacing:0.515px;">Registry Value Integrity Checksum Changed</span><span class="t" style="left:1588.30px;top:950.00px;font-family:'Liberation Mono', monospace;font-size:11px;line-height:12px;color:#4d5059;">5</span><span class="t" style="left:1776.30px;top:950.00px;font-family:'Liberation Mono', monospace;font-size:11px;line-height:12px;color:#3f8cc4;letter-spacing:0.515px;">750</span>
</body></html>
